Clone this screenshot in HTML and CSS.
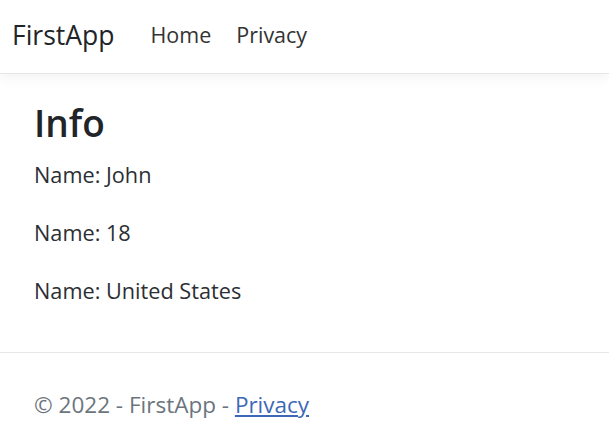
FILE: index.html
```html
<!DOCTYPE html>
<html lang="en">
<head>
<meta charset="utf-8">
<title>Info - FirstApp</title>
<link rel="stylesheet" href="styles.css">
</head>
<body>
<header class="topbar">
  <nav class="navbar">
    <a class="brand" href="#">FirstApp</a>
    <ul class="nav">
      <li><a class="nav-link" href="#">Home</a></li>
      <li><a class="nav-link" href="#">Privacy</a></li>
    </ul>
  </nav>
</header>
<main class="content">
  <h1 class="title">Info</h1>
  <p class="line">Name: John</p>
  <p class="line">Name: 18</p>
  <p class="line">Name: United States</p>
</main>
<footer class="footer">
  <span>&copy; 2022 - FirstApp - <a class="footer-link" href="#">Privacy</a></span>
</footer>
</body>
</html>
```

FILE: styles.css
```css
html, body {
  margin: 0;
  padding: 0;
  background: #ffffff;
}
body {
  font-family: "Open Sans", "Noto Sans", sans-serif;
  color: #212529;
}
a { text-decoration: none; }

.topbar {
  border-bottom: 1px solid #e6e6e6;
  box-shadow: 0 4px 12px rgba(0, 0, 0, 0.05);
}
.navbar {
  display: flex;
  align-items: center;
  height: 69px;
  padding: 0 12px 4px;
}
.brand {
  font-size: 26.5px;
  color: #212529;
  margin-right: 36px;
}
.nav {
  display: flex;
  gap: 25px;
  list-style: none;
  margin: 0;
  padding: 0;
}
.nav-link {
  font-size: 21.5px;
  color: #333333;
}

.content {
  padding: 27px 34px 44px;
}
.title {
  font-size: 37px;
  font-weight: 600;
  line-height: 44px;
  margin: 0 0 13px;
}
.line {
  font-size: 21.7px;
  line-height: 34px;
  margin: 0 0 24px;
  color: #2b2f33;
}
.line:last-child { margin-bottom: 0; }

.footer {
  border-top: 1px solid #e6e6e6;
  padding: 34px 34px 0;
  font-size: 22.5px;
  line-height: 36px;
  color: #6c757d;
}
.footer-link {
  color: #3d68b8;
  text-decoration: underline;
}
```
